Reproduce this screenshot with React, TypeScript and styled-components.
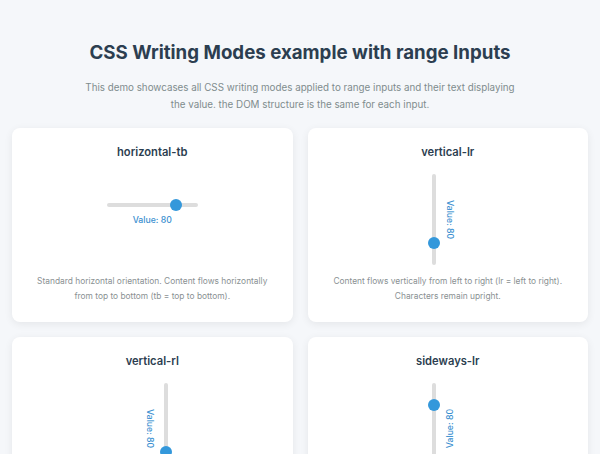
import React from 'react';
import styled, { createGlobalStyle, css } from 'styled-components';

type Mode = 'horizontal-tb' | 'vertical-lr' | 'vertical-rl' | 'sideways-lr';

interface Demo {
  mode: Mode;
  description: string;
}

const demos: Demo[] = [
  {
    mode: 'horizontal-tb',
    description:
      'Standard horizontal orientation. Content flows horizontally from top to bottom (tb = top to bottom).',
  },
  {
    mode: 'vertical-lr',
    description:
      'Content flows vertically from left to right (lr = left to right). Characters remain upright.',
  },
  {
    mode: 'vertical-rl',
    description:
      'Content flows vertically from right to left (rl = right to left). Characters remain upright.',
  },
  {
    mode: 'sideways-lr',
    description:
      'Content flows vertically from left to right, characters are rotated to the left.',
  },
];

const VALUE = 80;
const TRACK_LENGTH = 91;
const THUMB = 12;

const GlobalStyle = createGlobalStyle`
  html, body {
    margin: 0;
    padding: 0;
    background: #f5f7fa;
    font-family: Inter, "Noto Sans", sans-serif;
  }
`;

const Page = styled.div`
  padding: 41px 12px 12px;
  box-sizing: border-box;
`;

const Title = styled.h1`
  margin: 0;
  text-align: center;
  font-size: 18.7px;
  line-height: 24px;
  font-weight: 700;
  color: #2c3e50;
`;

const Intro = styled.p`
  margin: 14px auto 15px;
  max-width: 432px;
  text-align: center;
  font-size: 9.8px;
  line-height: 17px;
  color: #7f8c8d;
`;

const Grid = styled.div`
  display: grid;
  grid-template-columns: 1fr 1fr;
  gap: 15px;
`;

const Card = styled.section`
  background: #ffffff;
  border-radius: 8px;
  box-shadow: 0 2px 8px rgba(0, 0, 0, 0.07);
  padding: 16px 16px 18px;
  display: flex;
  flex-direction: column;
`;

const CardTitle = styled.h2`
  margin: 0;
  text-align: center;
  font-size: 11.2px;
  line-height: 16px;
  font-weight: 600;
  color: #2c3e50;
`;

const DemoArea = styled.div`
  margin-top: 6px;
  height: 107px;
  display: flex;
  align-items: center;
  justify-content: center;
`;

const SliderGroup = styled.div<{ $mode: Mode }>`
  display: flex;
  align-items: center;
  gap: 4px;
  ${({ $mode }) =>
    $mode === 'horizontal-tb'
      ? css`
          flex-direction: column;
          gap: 3px;
          margin-bottom: 14px;
        `
      : $mode === 'vertical-rl'
      ? css`
          flex-direction: row-reverse;
        `
      : css`
          flex-direction: row;
        `}
`;

const Slider = styled.div<{ $vertical: boolean }>`
  position: relative;
  width: ${({ $vertical }) => ($vertical ? `${THUMB}px` : `${TRACK_LENGTH}px`)};
  height: ${({ $vertical }) => ($vertical ? `${TRACK_LENGTH}px` : `${THUMB}px`)};
`;

const Track = styled.div<{ $vertical: boolean }>`
  position: absolute;
  background: #dddddd;
  border-radius: 2px;
  ${({ $vertical }) =>
    $vertical
      ? css`
          left: 4px;
          top: 0;
          bottom: 0;
          width: 4px;
        `
      : css`
          top: 4px;
          left: 0;
          right: 0;
          height: 4px;
        `}
`;

const Thumb = styled.div`
  position: absolute;
  width: ${THUMB}px;
  height: ${THUMB}px;
  border-radius: 50%;
  background: #3498db;
`;

const ValueText = styled.span<{ $mode: Mode }>`
  font-size: 8.7px;
  line-height: 12px;
  font-weight: 500;
  color: #3a8fd0;
  white-space: nowrap;
  ${({ $mode }) =>
    $mode === 'horizontal-tb'
      ? ''
      : $mode === 'sideways-lr'
      ? css`
          writing-mode: vertical-rl;
          transform: rotate(180deg);
          margin-right: 11px;
        `
      : $mode === 'vertical-rl'
      ? css`
          writing-mode: vertical-rl;
          margin-left: 11px;
        `
      : css`
          writing-mode: vertical-rl;
          margin-right: 11px;
        `}
`;

const Description = styled.p`
  margin: 1px 0 0;
  text-align: center;
  font-size: 8.4px;
  line-height: 15px;
  color: #8a9193;
`;

const RangeDemo: React.FC<{ mode: Mode }> = ({ mode }) => {
  const vertical = mode !== 'horizontal-tb';
  const offset = (VALUE / 100) * (TRACK_LENGTH - THUMB);
  const thumbStyle: React.CSSProperties =
    mode === 'horizontal-tb'
      ? { left: offset, top: 0 }
      : mode === 'sideways-lr'
      ? { left: 0, bottom: offset }
      : { left: 0, top: offset };

  return (
    <SliderGroup $mode={mode}>
      <Slider $vertical={vertical}>
        <Track $vertical={vertical} />
        <Thumb style={thumbStyle} />
      </Slider>
      <ValueText $mode={mode}>Value: {VALUE}</ValueText>
    </SliderGroup>
  );
};

export default function App() {
  return (
    <>
      <GlobalStyle />
      <Page>
        <Title>CSS Writing Modes example with range Inputs</Title>
        <Intro>
          This demo showcases all CSS writing modes applied to range inputs and their text
          displaying the value. the DOM structure is the same for each input.
        </Intro>
        <Grid>
          {demos.map((d) => (
            <Card key={d.mode}>
              <CardTitle>{d.mode}</CardTitle>
              <DemoArea>
                <RangeDemo mode={d.mode} />
              </DemoArea>
              <Description>{d.description}</Description>
            </Card>
          ))}
        </Grid>
      </Page>
    </>
  );
}
